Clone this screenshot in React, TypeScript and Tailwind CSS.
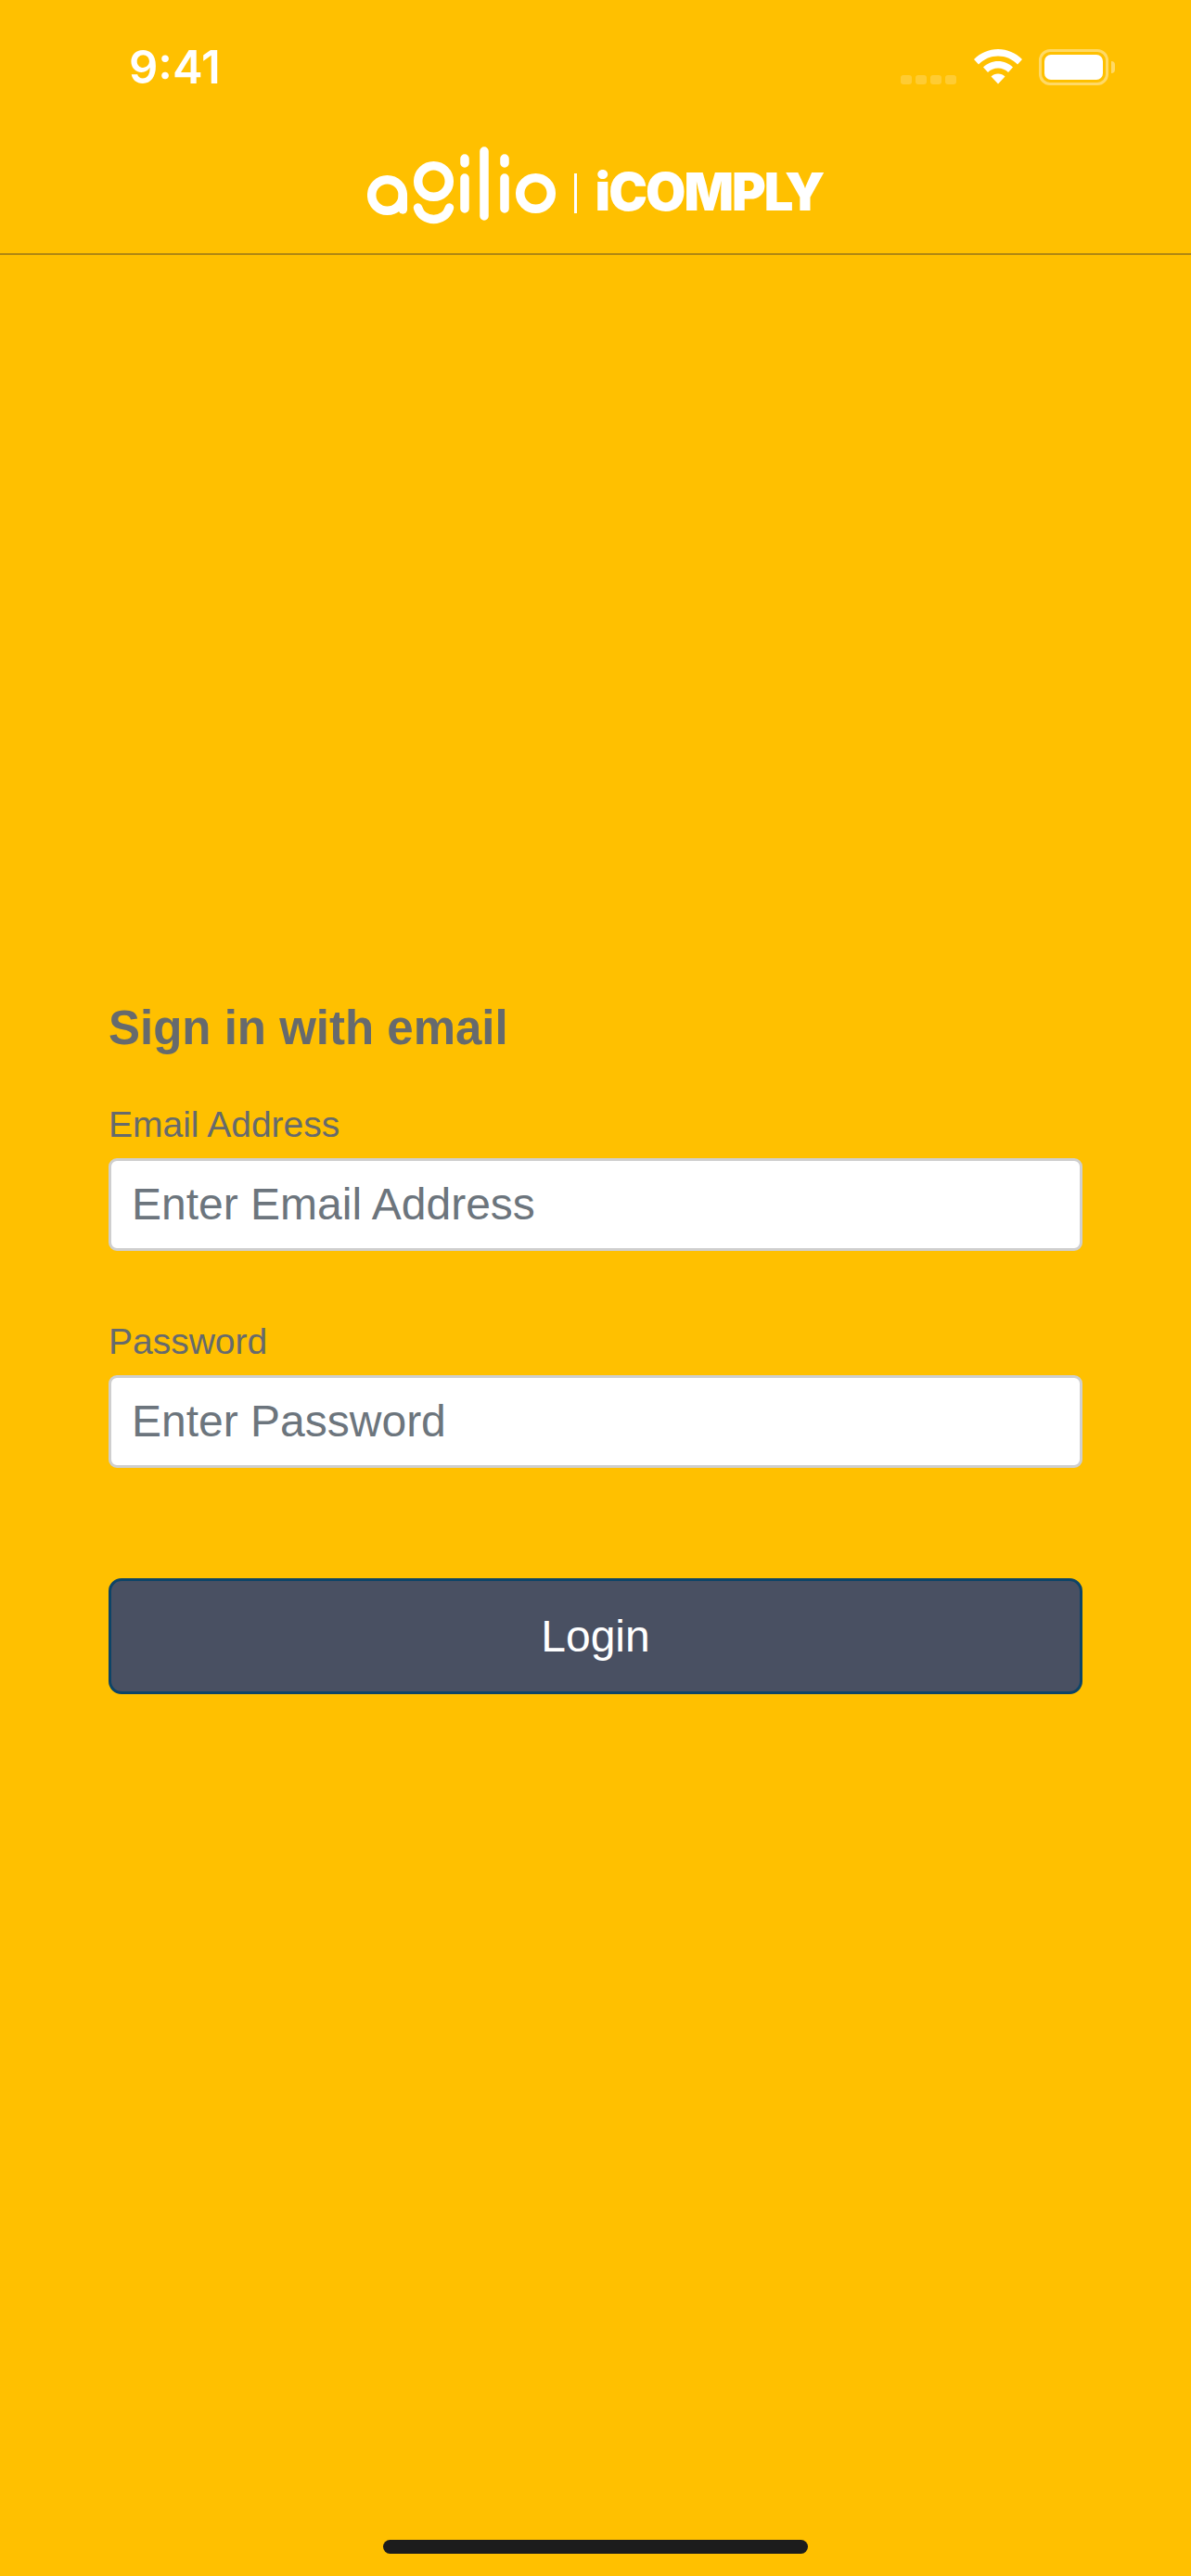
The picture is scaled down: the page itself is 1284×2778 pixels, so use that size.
const StatusIcons = () => (
  <div className="flex items-start gap-[18px]">
    <div className="mt-[28px] flex gap-1">
      <div className="h-[10px] w-3 rounded-[3px] bg-white/20" />
      <div className="h-[10px] w-3 rounded-[3px] bg-white/20" />
      <div className="h-[10px] w-3 rounded-[3px] bg-white/20" />
      <div className="h-[10px] w-3 rounded-[3px] bg-white/20" />
    </div>
    <svg width="52" height="38" viewBox="0 0 52 38" className="ml-[1px]">
      <path d="M26 0C16 0 7 4 0 11l5 5.500C10.500 10.800 18 7.500 26 7.500S41.500 10.800 47 16.500L52 11C45 4 36 0 26 0Z" fill="#fff" />
      <path d="M26 13c-6.200 0-11.800 2.500-16 6.500l5 5.500c2.900-2.800 6.800-4.500 11-4.500s8.100 1.700 11 4.500l5-5.500c-4.200-4-9.800-6.500-16-6.500Z" fill="#fff" />
      <path d="M26 26.500c-2.900 0-5.600 1.100-7.500 3L26 37.500l7.500-8c-1.900-1.900-4.600-3-7.500-3Z" fill="#fff" />
    </svg>
    <div className="flex items-center">
      <div className="flex h-[39px] w-[75px] items-center justify-center rounded-[12px] border-[3px] border-white/40">
        <div className="h-[27px] w-[63px] rounded-[7px] bg-white" />
      </div>
      <div className="ml-[3px] h-[13px] w-1 rounded-r-full bg-white/40" />
    </div>
  </div>
);

const AgilioMark = () => (
  <svg width="227" height="87" viewBox="395 156 227 87" fill="none" stroke="#fff" strokeWidth="9.500" strokeLinecap="round">
    <circle cx="416.500" cy="210.500" r="16.800" />
    <path d="M433.300 210v16" />
    <circle cx="466.500" cy="195.500" r="16.800" />
    <path d="M449.500 224c2.500 8 9 12.500 17 12.500s14.500-4.500 17-12.500" />
    <path d="M500 171v5M500 192v33M521 163v70M543 171v5M543 192v33" />
    <circle cx="576.500" cy="208.500" r="16.800" />
    <path d="M619.500 187v43" strokeWidth="3" strokeLinecap="butt" />
  </svg>
);

const Field = ({ label, placeholder, type }: { label: string; placeholder: string; type: string }) => (
  <div className="flex flex-col">
    <label className="text-[39px] leading-[44px] text-[#666a6d]">{label}</label>
    <input
      type={type}
      placeholder={placeholder}
      className="mt-[14px] h-[100px] w-full rounded-[9px] border-[3px] border-[#cfcfcf] bg-white px-[22px] pb-[2px] text-[48px] outline-none placeholder:text-[#6c757d] placeholder:opacity-100"
    />
  </div>
);

export default function App() {
  return (
    <div className="flex h-[2778px] w-full flex-col bg-[#ffc000] font-['Liberation_Sans',Arial,sans-serif]">
      <div className="flex h-[132px] items-start justify-between pl-[139px] pr-[82px] pt-[53px]">
        <div className="font-['Inter',sans-serif] text-[49px] font-semibold leading-[40px] text-white">9:41</div>
        <StatusIcons />
      </div>

      <div className="flex h-[143px] items-start justify-center border-b-2 border-[#b08712] pr-[1px] pt-[24px]">
        <AgilioMark />
        <div className="ml-[19px] mt-[23px] font-['Inter',sans-serif] text-[56px] font-black leading-[56px] tracking-[-2px] text-white">
          iCOMPLY
        </div>
      </div>

      <div className="flex flex-col px-[117px] pt-[806px]">
        <h1 className="text-[51px] font-bold leading-[56px] text-[#666a6d]">Sign in with email</h1>
        <div className="mt-[54px] flex flex-col gap-[76px]">
          <Field label="Email Address" placeholder="Enter Email Address" type="email" />
          <Field label="Password" placeholder="Enter Password" type="password" />
        </div>
        <button className="mt-[119px] h-[125px] w-full rounded-[14px] border-[3px] border-[#0d4467] bg-[#495062] text-[48px] text-white">
          Login
        </button>
      </div>

      <div className="mt-auto flex justify-center pb-[24px]">
        <div className="h-[15px] w-[458px] rounded-full bg-[#1c1c1c]" />
      </div>
    </div>
  );
}
